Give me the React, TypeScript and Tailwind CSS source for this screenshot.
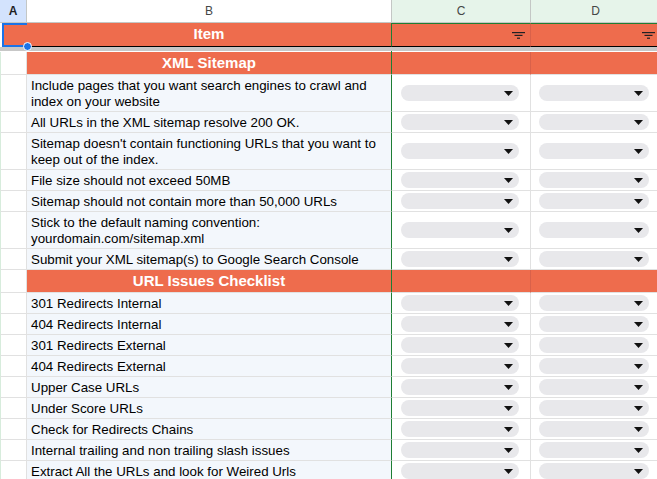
import React from "react";

type Item = { text: string; tall?: boolean };

const sections: { title: string; items: Item[] }[] = [
  {
    title: "XML Sitemap",
    items: [
      { text: "Include pages that you want search engines to crawl and index on your website", tall: true },
      { text: "All URLs in the XML sitemap resolve 200 OK." },
      { text: "Sitemap doesn't contain functioning URLs that you want to keep out of the index.", tall: true },
      { text: "File size should not exceed 50MB" },
      { text: "Sitemap should not contain more than 50,000 URLs" },
      { text: "Stick to the default naming convention: yourdomain.com/sitemap.xml", tall: true },
      { text: "Submit your XML sitemap(s) to Google Search Console" },
    ],
  },
  {
    title: "URL Issues Checklist",
    items: [
      { text: "301 Redirects Internal" },
      { text: "404 Redirects Internal" },
      { text: "301 Redirects External" },
      { text: "404 Redirects External" },
      { text: "Upper Case URLs" },
      { text: "Under Score URLs" },
      { text: "Check for Redirects Chains" },
      { text: "Internal trailing and non trailing slash issues" },
      { text: "Extract All the URLs and look for Weired Urls" },
    ],
  },
];

function Caret() {
  return (
    <svg width="9" height="5" viewBox="0 0 9 5" className="shrink-0">
      <path d="M0 0h9L4.5 5z" fill="#111" />
    </svg>
  );
}

function FilterIcon() {
  return (
    <svg width="13" height="7" viewBox="0 0 13 7">
      <rect x="0" y="0" width="13" height="1.2" fill="#202124" />
      <rect x="2.5" y="2.8" width="8" height="1.2" fill="#202124" />
      <rect x="5" y="5.6" width="3" height="1.2" fill="#202124" />
    </svg>
  );
}

function Chip({ width }: { width: string }) {
  return (
    <div className={`${width} h-[16px] rounded-full bg-[#e8e8eb] flex items-center justify-end pr-[6px]`}>
      <Caret />
    </div>
  );
}

function Row({ item }: { item: Item }) {
  const h = item.tall ? "h-[37px]" : "h-[21px]";
  return (
    <div className={`flex ${h}`}>
      <div className="w-[27px] shrink-0 border-b border-r border-[#e1e1e1] border-l border-l-[#d7ecdc] bg-white" />
      <div className="w-[364px] shrink-0 border-b border-[#e1e1e1] bg-[#f3f7fc] px-[4px] pt-[1px] flex items-center text-[13.33px] leading-[16px] text-black">
        {item.text}
      </div>
      <div className="w-[139px] shrink-0 border-b border-[#e1e1e1] border-l border-l-[#1e7e34] bg-white flex items-center pl-[9px]">
        <Chip width="w-[118px]" />
      </div>
      <div className="w-[130px] shrink-0 border-b border-l border-[#e1e1e1] bg-white flex items-center pl-[8px]">
        <Chip width="w-[110px]" />
      </div>
    </div>
  );
}

function Section({ title }: { title: string }) {
  return (
    <div className="flex h-[23px]">
      <div className="w-[27px] shrink-0 border-b border-r border-[#e1e1e1] border-l border-l-[#d7ecdc] bg-white" />
      <div className="w-[364px] shrink-0 border-b border-[#e1e1e1] bg-[#ee6c4d] flex items-center justify-center text-[15px] font-bold text-white">
        {title}
      </div>
      <div className="w-[139px] shrink-0 border-b border-[#e1e1e1] border-l border-l-[#1e7e34] bg-[#ee6c4d]" />
      <div className="w-[130px] shrink-0 border-b border-[#e1e1e1] border-l border-l-[#d9614a] bg-[#ee6c4d]" />
    </div>
  );
}

export default function App() {
  return (
    <div className="w-[657px] h-[479px] overflow-hidden bg-white font-['Liberation_Sans',Arial,sans-serif]">
      {/* column letters */}
      <div className="flex h-[23px] border-b border-[#c4c7c5] text-[12px] text-[#444746]">
        <div className="w-[27px] shrink-0 border-r border-[#c4c7c5] bg-[#d3e3fd] flex items-center justify-center font-bold text-[#1f1f1f]">
          A
        </div>
        <div className="w-[364px] shrink-0 bg-white flex items-center justify-center">B</div>
        <div className="w-[139px] shrink-0 border-l border-[#c4c7c5] bg-[#e6f4ea] flex items-center justify-center">C</div>
        <div className="w-[130px] shrink-0 border-l border-[#c4c7c5] bg-[#e6f4ea] flex items-center justify-center">D</div>
      </div>

      {/* frozen header row */}
      <div className="relative flex h-[24px]">
        <div className="w-[27px] shrink-0 bg-[#ee6c4d] border-2 border-[#1a73e8] ml-[2px] -mr-[2px]" />
        <div className="w-[364px] shrink-0 border-b border-black bg-[#ee6c4d] flex items-center justify-center text-[15px] font-bold text-white">
          Item
        </div>
        <div className="w-[139px] shrink-0 border-b border-b-black border-t border-t-[#1e7e34] border-l border-l-[#1e7e34] bg-[#ee6c4d] flex items-center justify-end pr-[5px]">
          <FilterIcon />
        </div>
        <div className="w-[130px] shrink-0 border-b border-b-black border-t border-t-[#1e7e34] border-l border-l-[#d9614a] bg-[#ee6c4d] flex items-center justify-end pr-[5px]">
          <FilterIcon />
        </div>
        <div className="absolute left-[23px] top-[19px] w-[9px] h-[9px] rounded-full bg-[#1a73e8] border border-white z-10" />
      </div>
      <div className="h-[4px] bg-[#c7c7c7]" />
      <div className="h-[1px] flex">
        <div className="w-[27px] bg-white" />
        <div className="w-[364px] bg-white" />
        <div className="w-[1px] bg-[#1e7e34]" />
      </div>

      {sections.map((s) => (
        <div key={s.title}>
          <Section title={s.title} />
          {s.items.map((it) => (
            <Row key={it.text} item={it} />
          ))}
        </div>
      ))}
    </div>
  );
}
